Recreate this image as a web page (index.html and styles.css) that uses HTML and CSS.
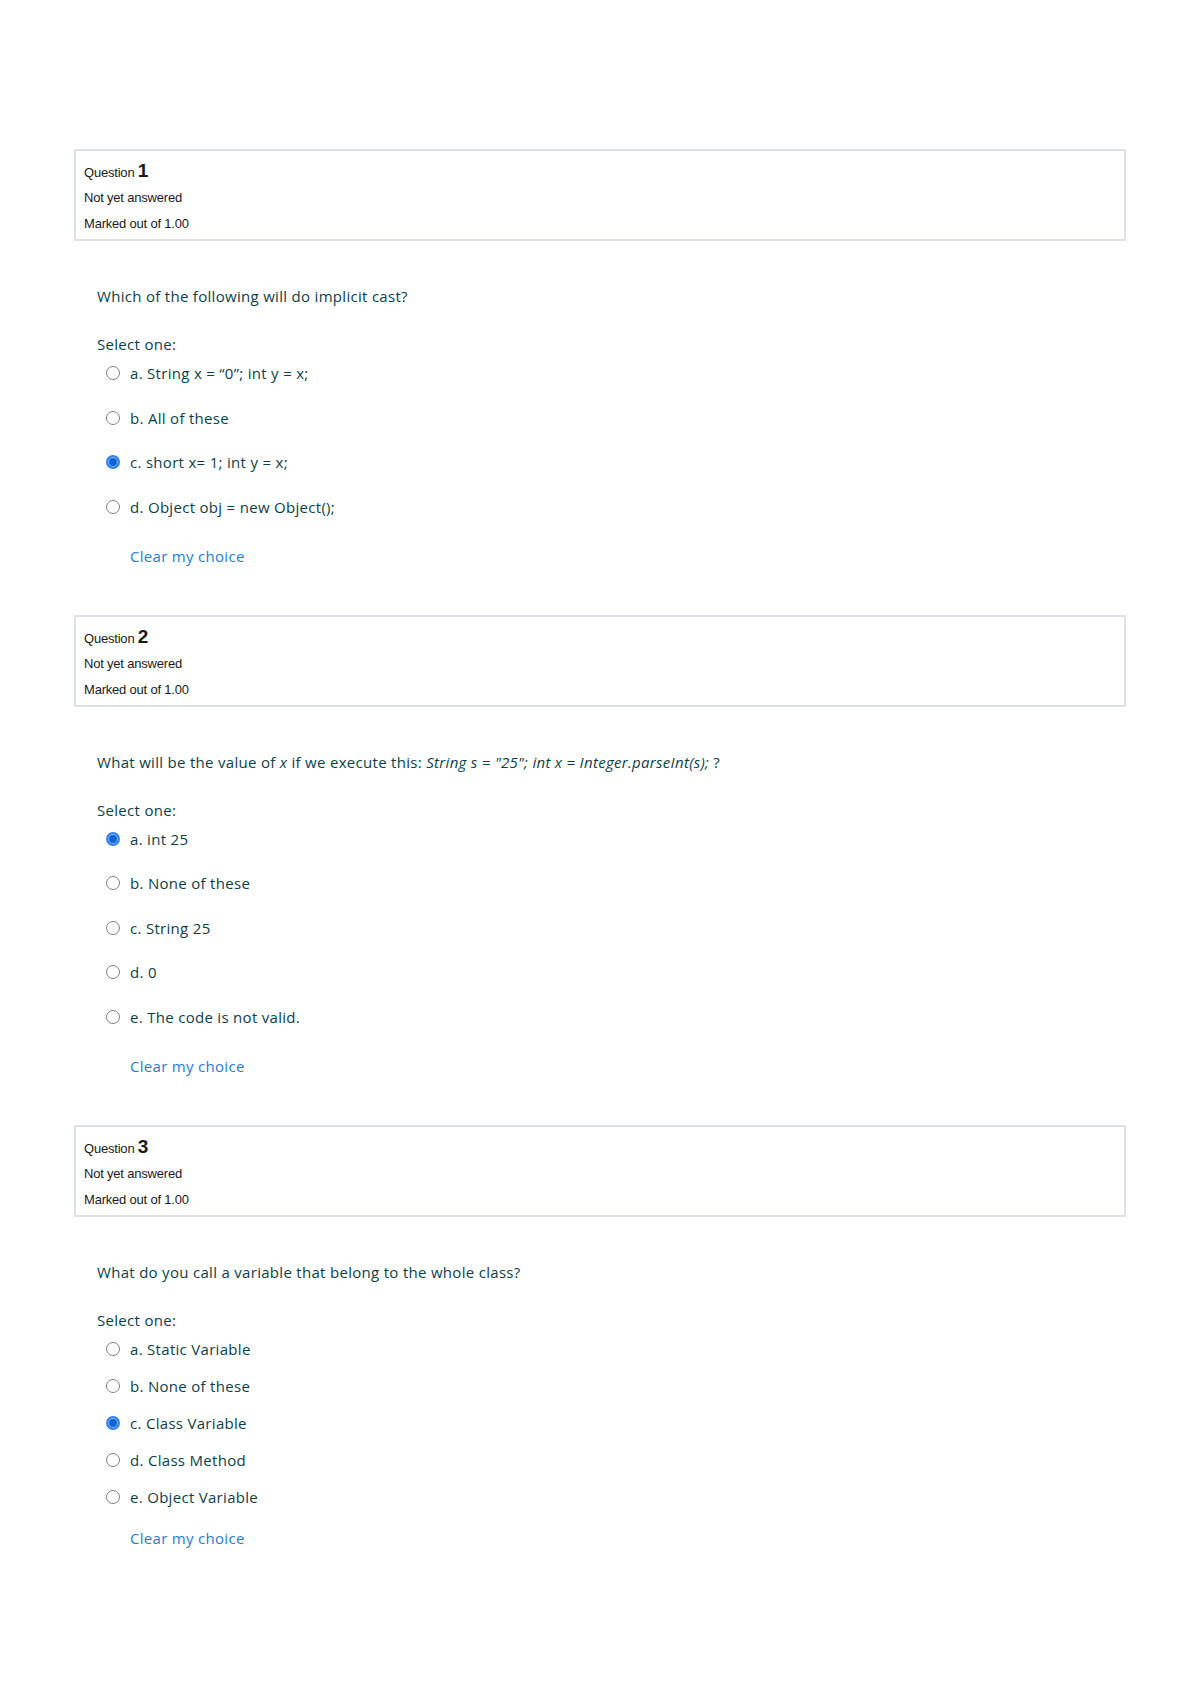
FILE: index.html
```html
<!DOCTYPE html>
<html lang="en">
<head>
<meta charset="utf-8">
<title>Quiz</title>
<link rel="stylesheet" href="styles.css">
</head>
<body>
<main class="page">

  <section class="que">
    <div class="info">
      <div class="qno">Question <span class="num">1</span></div>
      <div class="state">Not yet answered</div>
      <div class="grade">Marked out of 1.00</div>
    </div>
    <div class="content">
      <p class="qtext">Which of the following will do implicit cast?</p>
      <p class="prompt">Select one:</p>
      <div class="answer">
        <label class="opt"><input type="radio" name="q1"><span>a. String x = “0”; int y = x;</span></label>
        <label class="opt"><input type="radio" name="q1"><span>b. All of these</span></label>
        <label class="opt"><input type="radio" name="q1" checked><span>c. short x= 1; int y = x;</span></label>
        <label class="opt"><input type="radio" name="q1"><span>d. Object obj = new Object();</span></label>
      </div>
      <a class="clear" href="#">Clear my choice</a>
    </div>
  </section>

  <section class="que">
    <div class="info">
      <div class="qno">Question <span class="num">2</span></div>
      <div class="state">Not yet answered</div>
      <div class="grade">Marked out of 1.00</div>
    </div>
    <div class="content">
      <p class="qtext">What will be the value of <i>x</i> if we execute this: <i>String s = "25"; int x = Integer.parseInt(s);</i> ?</p>
      <p class="prompt">Select one:</p>
      <div class="answer">
        <label class="opt"><input type="radio" name="q2" checked><span>a. int 25</span></label>
        <label class="opt"><input type="radio" name="q2"><span>b. None of these</span></label>
        <label class="opt"><input type="radio" name="q2"><span>c. String 25</span></label>
        <label class="opt"><input type="radio" name="q2"><span>d. 0</span></label>
        <label class="opt"><input type="radio" name="q2"><span>e. The code is not valid.</span></label>
      </div>
      <a class="clear" href="#">Clear my choice</a>
    </div>
  </section>

  <section class="que">
    <div class="info">
      <div class="qno">Question <span class="num">3</span></div>
      <div class="state">Not yet answered</div>
      <div class="grade">Marked out of 1.00</div>
    </div>
    <div class="content compact">
      <p class="qtext">What do you call a variable that belong to the whole class?</p>
      <p class="prompt">Select one:</p>
      <div class="answer">
        <label class="opt"><input type="radio" name="q3"><span>a. Static Variable</span></label>
        <label class="opt"><input type="radio" name="q3"><span>b. None of these</span></label>
        <label class="opt"><input type="radio" name="q3" checked><span>c. Class Variable</span></label>
        <label class="opt"><input type="radio" name="q3"><span>d. Class Method</span></label>
        <label class="opt"><input type="radio" name="q3"><span>e. Object Variable</span></label>
      </div>
      <a class="clear" href="#">Clear my choice</a>
    </div>
  </section>

</main>
</body>
</html>
```

FILE: styles.css
```css
html, body {
  margin: 0;
  padding: 0;
  background: #ffffff;
}

body {
  font-family: "Open Sans", "Liberation Sans", Arial, sans-serif;
  color: #0d3f49;
}

.page {
  width: 1052px;
  padding: 149px 0 0 74px;
}

.que {
  margin-bottom: 49px;
}

.info {
  border: 2px solid #dde1e5;
  padding: 6px 10px 2px 8px;
  color: #1a1a1a;
  font-family: "Liberation Sans", Arial, sans-serif;
  font-size: 13px;
  letter-spacing: -0.2px;
}

.qno {
  height: 28px;
  line-height: 28px;
}

.num {
  font-size: 19px;
  font-weight: bold;
  letter-spacing: 0;
}

.state,
.grade {
  height: 26px;
  line-height: 26px;
}

.content {
  padding-left: 23px;
  font-size: 15px;
  letter-spacing: 0.3px;
}

.qtext,
.prompt {
  margin: 0;
  line-height: 20px;
}

.qtext {
  margin-top: 45px;
}

.prompt {
  margin-top: 28px;
}

.answer {
  margin-top: 9px;
  padding-left: 9px;
  display: flex;
  flex-direction: column;
  gap: 24.5px;
}

.compact .answer {
  gap: 17px;
}

.opt {
  display: flex;
  align-items: center;
  gap: 10px;
  height: 20px;
  line-height: 20px;
}

.opt input {
  -webkit-appearance: none;
  appearance: none;
  margin: 0;
  width: 14px;
  height: 14px;
  border: 1.6px solid #808080;
  border-radius: 50%;
  background: #ffffff;
  box-sizing: border-box;
  flex: none;
}

.opt input:checked {
  border: 2px solid #2f84f0;
  background: #0d63d8;
  box-shadow: inset 0 0 0 1px #9cc6fa;
}

.clear {
  display: block;
  margin-top: 29px;
  margin-left: 33px;
  line-height: 20px;
  color: #2a7bd6;
  text-decoration: none;
}

.compact .clear {
  margin-top: 21px;
}
```
